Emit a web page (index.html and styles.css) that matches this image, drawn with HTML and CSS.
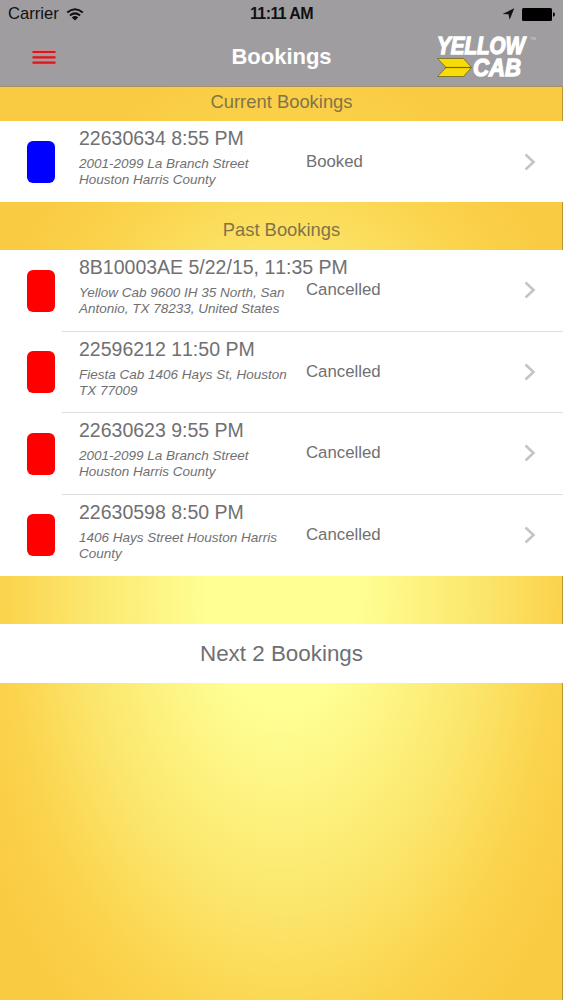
FILE: index.html
```
<!DOCTYPE html>
<html lang="en">
<head>
  <meta charset="UTF-8">
  <title>Bookings</title>
  <link rel="stylesheet" href="styles.css">
</head>
<body>
  <header class="top">
    <div class="status-bar">
      <div class="carrier">
        <span>Carrier</span>
        <svg width="18" height="13" viewBox="0 0 18 13">
          <path d="M1.2 4.6Q9 -2 16.8 4.6M3.9 7.5Q9 3.2 14.1 7.5" fill="none" stroke="#111" stroke-width="2"/>
          <path d="M5.8 9.4Q9 6.8 12.2 9.4L9 12.6Z" fill="#111"/>
        </svg>
      </div>
      <div class="clock">11:11 AM</div>
      <div class="indicators">
        <svg width="13" height="12" viewBox="0 0 13 12">
          <path d="M12.3 .3L7.6 11.7L6.5 6.2L.5 6Z" fill="#111"/>
        </svg>
        <svg width="33" height="13" viewBox="0 0 33 13">
          <rect x="0" y="0" width="30" height="13" rx="1.5" fill="#000"/>
          <path d="M31 4.2Q33 4.8 33 6.5T31 8.8Z" fill="#000"/>
        </svg>
      </div>
    </div>
    <nav class="nav-bar">
      <svg class="menu" width="24" height="15" viewBox="0 0 24 15">
        <path d="M1 2H23M1 7.3H23M1 12.6H23" stroke="#d98588" stroke-width="3.8"/>
        <path d="M.5 2H23.5M.5 7.3H23.5M.5 12.6H23.5" stroke="#d41820" stroke-width="2.2"/>
      </svg>
      <h1 class="title">Bookings</h1>
      <svg class="logo" width="102" height="46" viewBox="0 0 102 46">
        <g class="logo-text">
          <text x="2" y="20" textLength="88" lengthAdjust="spacingAndGlyphs">YELLOW</text>
          <text x="38" y="42" textLength="48" lengthAdjust="spacingAndGlyphs">CAB</text>
        </g>
        <path d="M2.5 24.5H28.5L36.5 33.5L28.5 42.5H2.5L11 33.5Z" fill="#f7dc08" stroke="#6f6722" stroke-width=".8"/>
        <path d="M10 33.5H36" stroke="#6f6722" stroke-width="1.2"/>
        <text class="tm" x="95" y="6">TM</text>
      </svg>
    </nav>
  </header>

  <main>
    <h2 class="section-title current">Current Bookings</h2>
    <ul class="bookings">
      <li class="booking">
        <span class="marker booked"></span>
        <div class="content">
          <div class="details">
            <div class="ref">22630634 8:55 PM</div>
            <div class="address">2001-2099 La Branch Street<br>Houston Harris County</div>
          </div>
          <div class="state">Booked</div>
          <svg class="chevron" width="12" height="18" viewBox="0 0 12 18"><path d="M1.5 1.5L9.5 9L1.5 16.5"/></svg>
        </div>
      </li>
    </ul>

    <h2 class="section-title past">Past Bookings</h2>
    <ul class="bookings">
      <li class="booking">
        <span class="marker"></span>
        <div class="content">
          <div class="details">
            <div class="ref">8B10003AE 5/22/15, 11:35 PM</div>
            <div class="address">Yellow Cab 9600 IH 35 North, San<br>Antonio, TX 78233, United States</div>
          </div>
          <div class="state">Cancelled</div>
          <svg class="chevron" width="12" height="18" viewBox="0 0 12 18"><path d="M1.5 1.5L9.5 9L1.5 16.5"/></svg>
        </div>
      </li>
      <li class="booking">
        <span class="marker"></span>
        <div class="content">
          <div class="details">
            <div class="ref">22596212 11:50 PM</div>
            <div class="address">Fiesta Cab 1406 Hays St, Houston<br>TX 77009</div>
          </div>
          <div class="state">Cancelled</div>
          <svg class="chevron" width="12" height="18" viewBox="0 0 12 18"><path d="M1.5 1.5L9.5 9L1.5 16.5"/></svg>
        </div>
      </li>
      <li class="booking">
        <span class="marker"></span>
        <div class="content">
          <div class="details">
            <div class="ref">22630623 9:55 PM</div>
            <div class="address">2001-2099 La Branch Street<br>Houston Harris County</div>
          </div>
          <div class="state">Cancelled</div>
          <svg class="chevron" width="12" height="18" viewBox="0 0 12 18"><path d="M1.5 1.5L9.5 9L1.5 16.5"/></svg>
        </div>
      </li>
      <li class="booking">
        <span class="marker"></span>
        <div class="content">
          <div class="details">
            <div class="ref">22630598 8:50 PM</div>
            <div class="address">1406 Hays Street Houston Harris<br>County</div>
          </div>
          <div class="state">Cancelled</div>
          <svg class="chevron" width="12" height="18" viewBox="0 0 12 18"><path d="M1.5 1.5L9.5 9L1.5 16.5"/></svg>
        </div>
      </li>
    </ul>

    <button class="next-btn">Next 2 Bookings</button>
  </main>
</body>
</html>
```
FILE: styles.css
```
* {
  box-sizing: border-box;
}

body {
  margin: 0;
  height: 1000px;
  overflow: hidden;
  font-family: "Liberation Sans", Arial, sans-serif;
  color: #707073;
  background:
    linear-gradient(#b9952f, #b9952f) right top / 1px 100% no-repeat,
    radial-gradient(ellipse 340px 540px at 282px 590px, #ffff94 0%, #ffff94 22%, #fbe56a 60%, #fbd34c 82%, #f9cb42 100%);
}

.top {
  height: 87px;
  background: #9f9d9f;
  border-bottom: 1px solid #a58f68;
}

.status-bar {
  display: grid;
  grid-template-columns: 1fr auto 1fr;
  align-items: center;
  height: 28px;
  padding: 0 8px;
  color: #111;
}

.carrier {
  display: flex;
  align-items: center;
  gap: 7px;
  font-size: 16.6px;
}

.clock {
  font-size: 16px;
  font-weight: bold;
  letter-spacing: -0.6px;
}

.indicators {
  display: flex;
  align-items: center;
  justify-content: flex-end;
  gap: 7px;
}

.nav-bar {
  display: grid;
  grid-template-columns: 1fr auto 1fr;
  align-items: center;
  height: 58px;
  padding: 0 26px 0 32px;
}

.title {
  margin: 0 6px 0 0;
  font-size: 22px;
  line-height: 26px;
  font-weight: bold;
  color: #fff;
}

.logo {
  justify-self: end;
}

.logo-text {
  font-size: 23px;
  font-weight: bold;
  font-style: italic;
  fill: #fff;
  stroke: #fff;
  stroke-width: 1.3px;
}

.tm {
  font-size: 4px;
  fill: #d5d5d5;
}

.section-title {
  margin: 0;
  font-size: 18.4px;
  font-weight: normal;
  text-align: center;
  color: #827449;
}

.current {
  height: 34px;
  line-height: 30px;
}

.past {
  height: 48px;
  padding-top: 8px;
  line-height: 40px;
}

.bookings {
  margin: 0;
  padding: 0;
  list-style: none;
  background: #fff;
}

.booking {
  display: flex;
  height: 81.5px;
}

.current + .bookings .booking {
  height: 81px;
}

.marker {
  width: 28px;
  height: 42px;
  margin: 19.5px 7px 0 27px;
  border-radius: 6px;
  background: #f00;
}

.marker.booked {
  background: #00f;
}

.content {
  flex: 1;
  display: flex;
  align-items: center;
  padding: 0 27px 0 17px;
  border-bottom: 1px solid #dedee0;
}

.booking:last-child .content {
  border-bottom: none;
}

.details {
  align-self: flex-start;
  width: 227px;
  padding-top: 6px;
  white-space: nowrap;
}

.ref {
  font-size: 19.5px;
  line-height: 23px;
  font-kerning: none;
}

.address {
  margin-top: 6px;
  font-size: 13.5px;
  line-height: 16px;
  font-style: italic;
}

.state {
  flex: 1;
  font-size: 16.8px;
}

.chevron {
  fill: none;
  stroke: #c5c5c9;
  stroke-width: 2.6;
}

.next-btn {
  display: block;
  width: 100%;
  height: 59px;
  margin-top: 48px;
  padding: 0;
  border: none;
  background: #fff;
  color: #707073;
  font-family: inherit;
  font-size: 22.4px;
}
```
